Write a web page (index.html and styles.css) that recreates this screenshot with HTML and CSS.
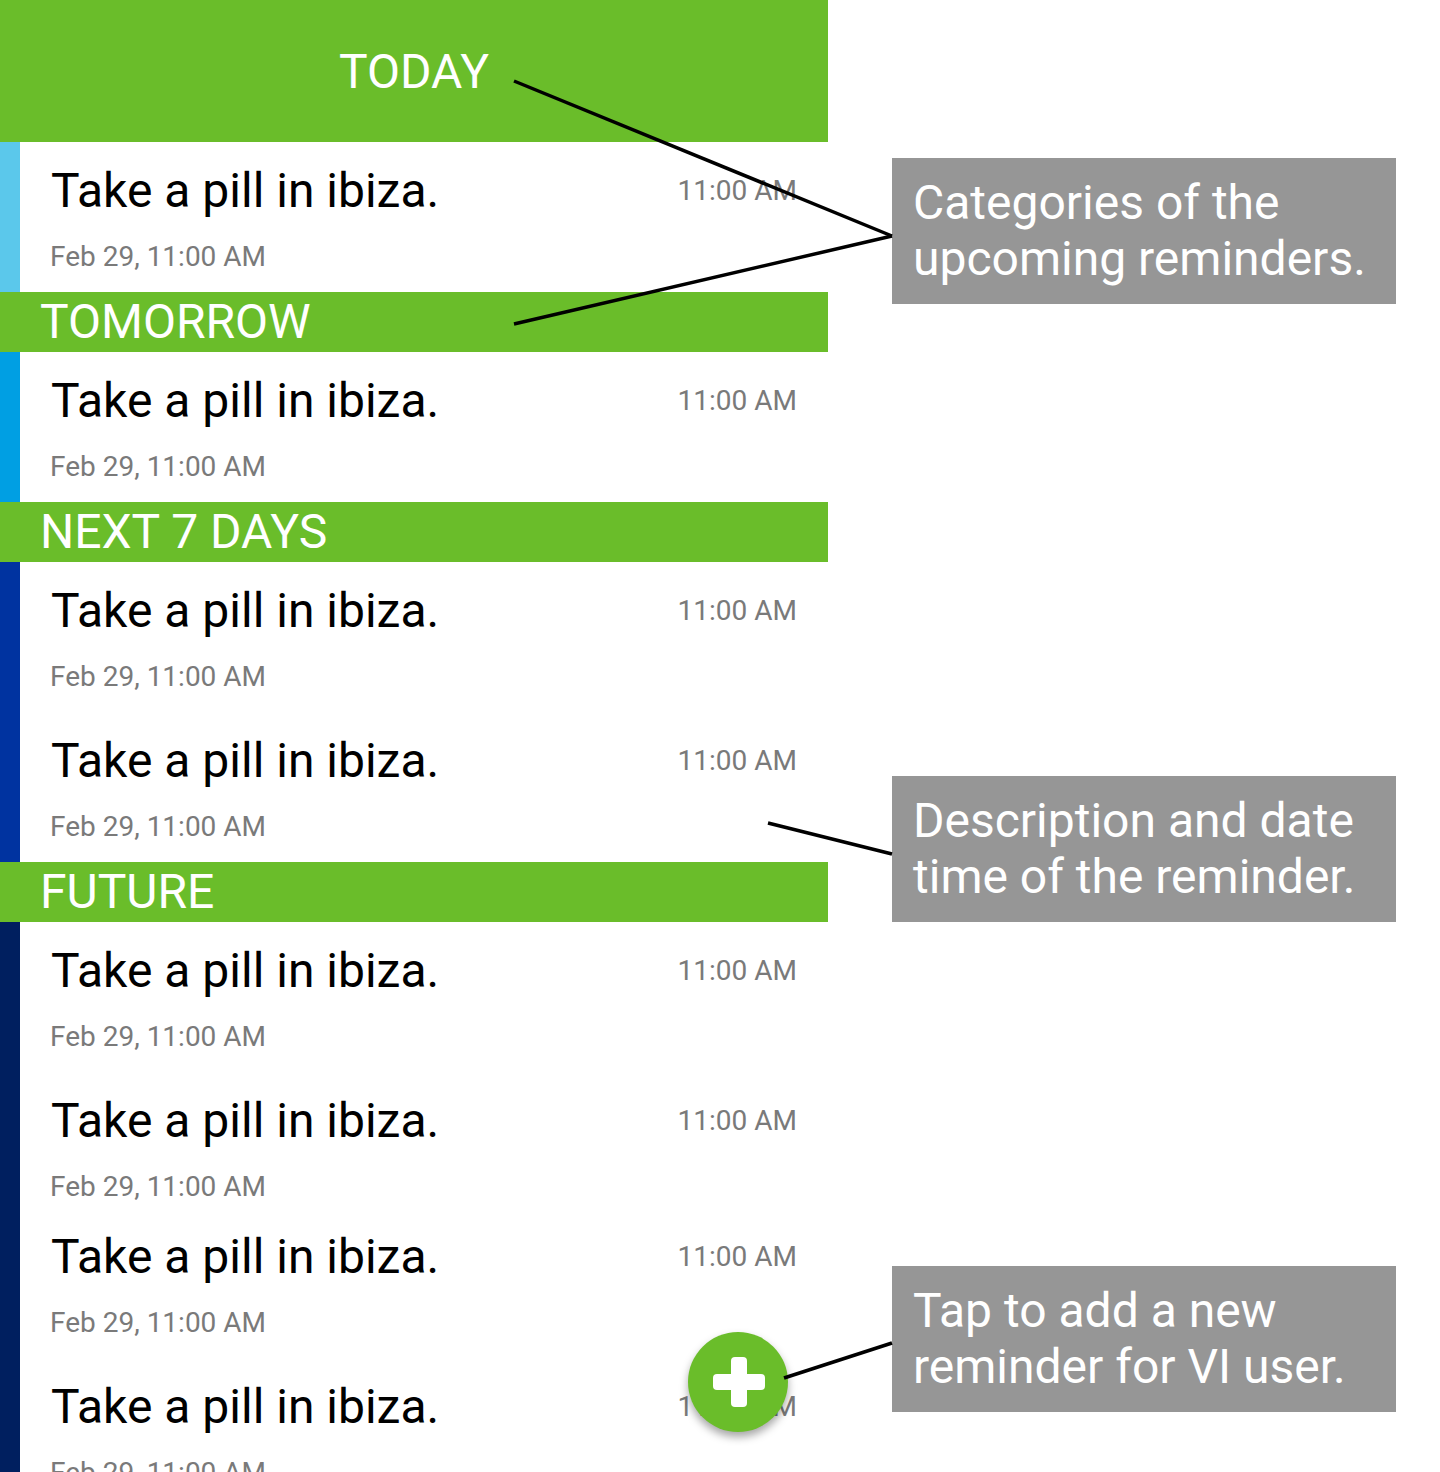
FILE: index.html
```html
<!DOCTYPE html>
<html lang="en">
<head>
<meta charset="utf-8">
<title>Reminders</title>
<link rel="stylesheet" href="styles.css">
</head>
<body>
<div class="page">
  <div class="list">
    <div class="today">TODAY</div>
    <div class="group bar-1">
      <div class="item"><div class="top"><span class="title">Take a pill in ibiza.</span><span class="time">11:00 AM</span></div><div class="date">Feb 29, 11:00 AM</div></div>
    </div>
    <div class="section">TOMORROW</div>
    <div class="group bar-2">
      <div class="item"><div class="top"><span class="title">Take a pill in ibiza.</span><span class="time">11:00 AM</span></div><div class="date">Feb 29, 11:00 AM</div></div>
    </div>
    <div class="section">NEXT 7 DAYS</div>
    <div class="group bar-3">
      <div class="item"><div class="top"><span class="title">Take a pill in ibiza.</span><span class="time">11:00 AM</span></div><div class="date">Feb 29, 11:00 AM</div></div>
      <div class="item"><div class="top"><span class="title">Take a pill in ibiza.</span><span class="time">11:00 AM</span></div><div class="date">Feb 29, 11:00 AM</div></div>
    </div>
    <div class="section">FUTURE</div>
    <div class="group bar-4">
      <div class="item"><div class="top"><span class="title">Take a pill in ibiza.</span><span class="time">11:00 AM</span></div><div class="date">Feb 29, 11:00 AM</div></div>
      <div class="item item-short"><div class="top"><span class="title">Take a pill in ibiza.</span><span class="time">11:00 AM</span></div><div class="date">Feb 29, 11:00 AM</div></div>
      <div class="item"><div class="top"><span class="title">Take a pill in ibiza.</span><span class="time">11:00 AM</span></div><div class="date">Feb 29, 11:00 AM</div></div>
      <div class="item"><div class="top"><span class="title">Take a pill in ibiza.</span><span class="time">11:00 AM</span></div><div class="date">Feb 29, 11:00 AM</div></div>
    </div>
  </div>
  <div class="notes">
    <div class="note note-1">Categories of the upcoming reminders.</div>
    <div class="note note-2">Description and date time of the reminder.</div>
    <div class="note note-3">Tap to add a new reminder for VI user.</div>
  </div>
  <div class="fab" aria-label="Add reminder">
    <svg width="100" height="100" viewBox="0 0 100 100">
      <rect x="25" y="42" width="52" height="16" rx="4" fill="#fff"/>
      <rect x="43" y="25" width="16" height="50" rx="4" fill="#fff"/>
    </svg>
  </div>
  <svg class="leaders" width="1440" height="1472" viewBox="0 0 1440 1472">
    <g stroke="#000" stroke-width="3.5" fill="none" stroke-linecap="butt">
      <line x1="514" y1="81" x2="892" y2="236"/>
      <line x1="514" y1="324" x2="892" y2="236"/>
      <line x1="768" y1="823" x2="892" y2="854"/>
      <line x1="784" y1="1378" x2="892" y2="1343"/>
    </g>
  </svg>
</div>
</body>
</html>
```
FILE: styles.css
```css
html, body {
  margin: 0;
  padding: 0;
  background: #fff;
}
body {
  font-family: Roboto, "Noto Sans", "Liberation Sans", sans-serif;
  height: 1472px;
  overflow: hidden;
}
.page {
  position: relative;
  display: flex;
  align-items: flex-start;
  width: 1440px;
  height: 1472px;
  overflow: hidden;
}
.list {
  width: 828px;
  flex: none;
  display: block;
}
.today {
  height: 142px;
  box-sizing: border-box;
  padding-top: 44px;
  background: #6abd2a;
  color: #fff;
  font-size: 48px;
  line-height: 56px;
  text-align: center;
}
.section {
  height: 60px;
  box-sizing: border-box;
  padding: 2px 0 0 40px;
  background: #6abd2a;
  color: #fff;
  font-size: 48px;
  line-height: 56px;
  white-space: nowrap;
}
.group {
  border-left: 20px solid #5bc8eb;
}
.bar-1 { border-left-color: #5bc8eb; }
.bar-2 { border-left-color: #009fe3; }
.bar-3 { border-left-color: #0033a0; }
.bar-4 { border-left-color: #001f5f; }
.item {
  height: 150px;
  box-sizing: border-box;
  padding: 21px 31px 0 31px;
  display: flex;
  flex-direction: column;
  gap: 22px;
}
.item-short {
  height: 136px;
}
.top {
  display: flex;
  justify-content: space-between;
  align-items: flex-start;
  height: 56px;
  flex: none;
}
.title {
  font-size: 48px;
  line-height: 56px;
  color: #000;
  white-space: nowrap;
}
.time {
  margin-top: 12px;
  font-size: 28px;
  line-height: 32px;
  color: #7a7a7a;
}
.date {
  font-size: 28px;
  line-height: 32px;
  color: #7a7a7a;
  margin-left: -1px;
  flex: none;
}
.notes {
  flex: 1;
  padding-left: 64px;
  display: flex;
  flex-direction: column;
}
.note {
  width: 504px;
  height: 146px;
  flex: none;
  box-sizing: border-box;
  padding: 17px 0 0 21px;
  background: #969696;
  color: #fff;
  font-size: 48px;
  line-height: 56px;
}
.note-1 { margin-top: 158px; }
.note-2 { margin-top: 472px; }
.note-3 { margin-top: 344px; }
.fab {
  position: absolute;
  left: 688px;
  top: 1332px;
  width: 100px;
  height: 100px;
  border-radius: 50%;
  background: #6abd2a;
  box-shadow: 0 5px 8px rgba(0, 0, 0, 0.35);
}
.fab svg {
  display: block;
}
.leaders {
  position: absolute;
  left: 0;
  top: 0;
  pointer-events: none;
}
```
